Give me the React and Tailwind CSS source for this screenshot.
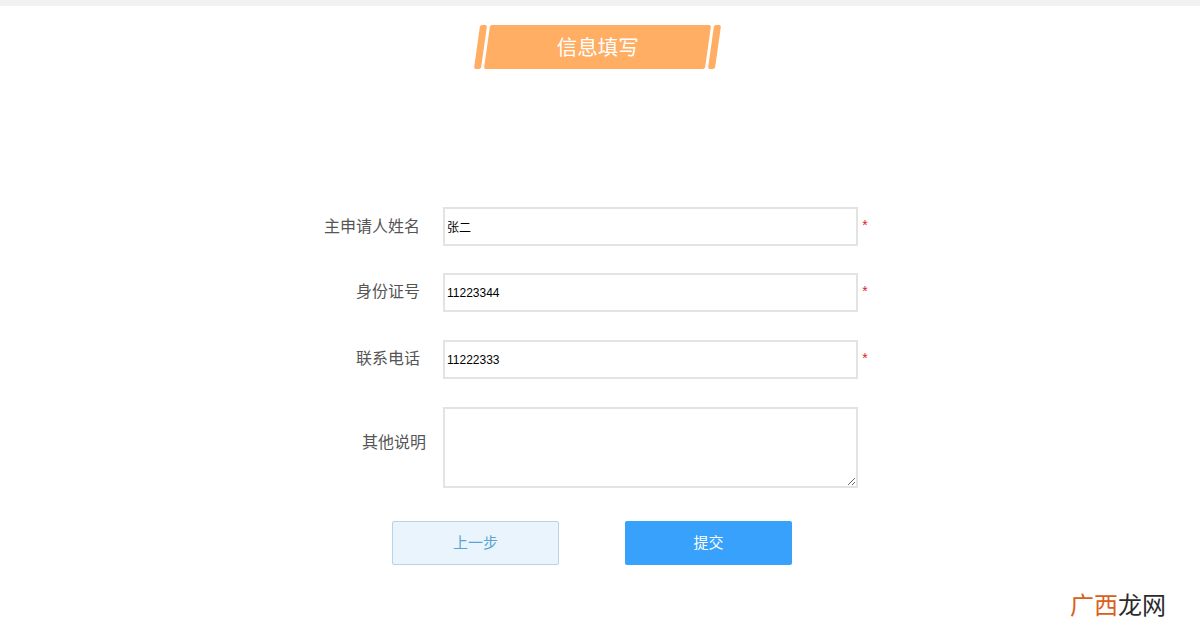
import React from 'react';

const FONT = "font-['Liberation_Sans','Noto_Sans_CJK_SC',sans-serif]";

function Row({ label, value, className, labelClass = '' }) {
  return (
    <div className={`flex items-center h-[39px] ${className}`}>
      <label className={`w-[120px] pr-[23px] text-right text-base text-[#555555] ${labelClass}`}>{label}</label>
      <input
        readOnly
        value={value}
        className="w-[415px] h-[39px] border-2 border-[#e3e3e3] bg-white px-[2px] text-xs text-black outline-none"
      />
      <span className="ml-[2px] mb-[3px] w-[10px] text-center text-sm text-[#e0202a]">*</span>
    </div>
  );
}

export default function App() {
  return (
    <div className={`${FONT} h-[634px] overflow-hidden bg-white relative`}>
      <div className="h-[6px] bg-[#f2f2f2]" />

      {/* title banner */}
      <div className="flex justify-center h-[44px] mt-[19px] pr-[6px] gap-[3px]">
        <div className="w-[7px] bg-[#ffae64] rounded-[2px] -skew-x-[8deg]" />
        <div className="w-[221px] bg-[#ffae64] rounded-[2px] -skew-x-[8deg] flex items-center justify-center">
          <span className="skew-x-[8deg] mt-[2px] text-[20.5px] text-white">信息填写</span>
        </div>
        <div className="w-[7px] bg-[#ffae64] rounded-[2px] -skew-x-[8deg]" />
      </div>

      <div className="mt-[138px] ml-[323px]">
        <Row label="主申请人姓名" value="张二" className="mb-[27px]" />
        <Row label="身份证号" value="11223344" className="mb-[28px]" labelClass="mb-[2px]" />
        <Row label="联系电话" value="11222333" className="mb-[28px]" labelClass="mb-[2px]" />
        <div className="flex items-start">
          <label className="w-[120px] pr-[17px] pt-[24px] text-right text-base text-[#555555]">其他说明</label>
          <textarea
            readOnly
            className="w-[415px] h-[81px] border-2 border-[#e3e3e3] bg-white outline-none"
          />
        </div>
        <div className="flex ml-[69px] mt-[33px] gap-[66px]">
          <button className="w-[167px] h-[44px] rounded-[2px] border border-[#b8d2e8] bg-[#eaf4fd] text-[15px] text-[#5aa4d2]">
            上一步
          </button>
          <button className="w-[167px] h-[44px] rounded-[2px] bg-[#38a1fb] text-[15px] text-white">
            提交
          </button>
        </div>
      </div>

      {/* watermark */}
      <div className="absolute left-[1070px] top-[591px] text-2xl leading-[30px]">
        <span className="text-[#d9601a]">广西</span>
        <span className="text-[#2b2b2b]">龙网</span>
      </div>
    </div>
  );
}
